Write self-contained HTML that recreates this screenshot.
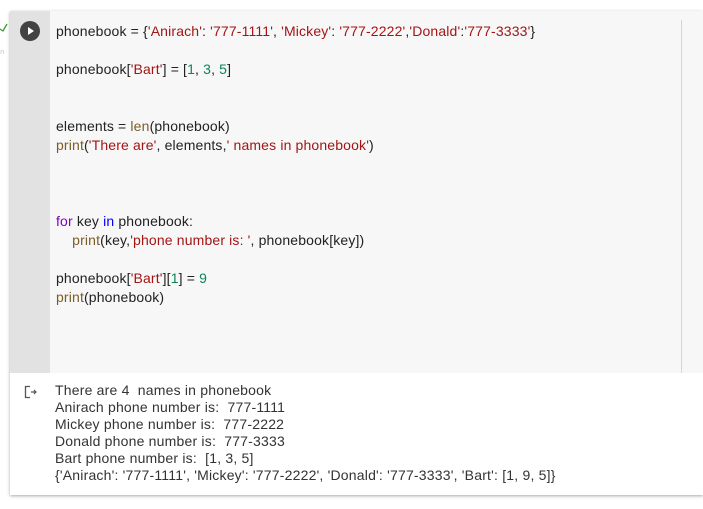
<!DOCTYPE html>
<html><head><meta charset="utf-8"><style>
html,body{margin:0;padding:0;width:703px;height:509px;background:#fff;overflow:hidden;font-family:"Liberation Sans","Noto Sans CJK SC",sans-serif;}
.cell{position:absolute;left:10px;top:11px;width:693px;height:484px;background:#fff;box-shadow:0 1px 3px rgba(0,0,0,.35);}
.gut{position:absolute;left:10px;top:11px;width:40px;height:362px;background:#e2e2e2;}
.code{position:absolute;left:50px;top:11px;width:653px;height:362px;background:#f7f7f7;}
.vl{position:absolute;left:681px;top:20px;width:1px;height:353px;background:#d6d6d6;}
pre{margin:0;font-family:"Liberation Sans",sans-serif;}
.src{position:absolute;left:56px;top:22px;font-size:14px;line-height:19px;color:#222;white-space:pre;letter-spacing:0.15px;}
.out{position:absolute;left:55px;top:382px;font-size:14px;line-height:17px;color:#333;white-space:pre;letter-spacing:0.2px;}
.s{color:#a31515}.n{color:#098658}.f{color:#795e26}.k{color:#7f00c0}.b{color:#0000ff}
.play{position:absolute;left:20px;top:21px;width:20px;height:20px;border-radius:50%;background:#424242;}
.play:after{content:"";position:absolute;left:8px;top:6px;border-left:6px solid #fff;border-top:4px solid transparent;border-bottom:4px solid transparent;}
</style></head><body>
<div class="cell"></div>
<div class="gut"></div>
<div class="code"></div>
<div class="vl"></div>
<div class="play"></div>
<svg style="position:absolute;left:0;top:20px" width="10" height="40"><path d="M0 9 L3 11 L7 4" stroke="#3c9a3c" stroke-width="1.3" fill="none"/><text x="0" y="34" font-size="7" fill="#bbb">ก</text></svg>
<svg style="position:absolute;left:24px;top:385px" width="14" height="14"><path d="M6 1.5 H1.5 V12.5 H6" stroke="#555" stroke-width="1.3" fill="none"/><path d="M7 7 H12 M10 5 L12 7 L10 9" stroke="#555" stroke-width="1.2" fill="none"/></svg>
<pre class="src">phonebook = {<span class="s">'Anirach'</span>: <span class="s">'777-1111'</span>, <span class="s">'Mickey'</span>: <span class="s">'777-2222'</span>,<span class="s">'Donald'</span>:<span class="s">'777-3333'</span>}

phonebook[<span class="s">'Bart'</span>] = [<span class="n">1</span>, <span class="n">3</span>, <span class="n">5</span>]


elements = <span class="f">len</span>(phonebook)
<span class="f">print</span>(<span class="s">'There are'</span>, elements,<span class="s">' names in phonebook'</span>)



<span class="k">for</span> key <span class="b">in</span> phonebook:
    <span class="f">print</span>(key,<span class="s">'phone number is: '</span>, phonebook[key])

phonebook[<span class="s">'Bart'</span>][<span class="n">1</span>] = <span class="n">9</span>
<span class="f">print</span>(phonebook)</pre>
<pre class="out">There are 4  names in phonebook
Anirach phone number is:  777-1111
Mickey phone number is:  777-2222
Donald phone number is:  777-3333
Bart phone number is:  [1, 3, 5]
{'Anirach': '777-1111', 'Mickey': '777-2222', 'Donald': '777-3333', 'Bart': [1, 9, 5]}</pre>
</body></html>
